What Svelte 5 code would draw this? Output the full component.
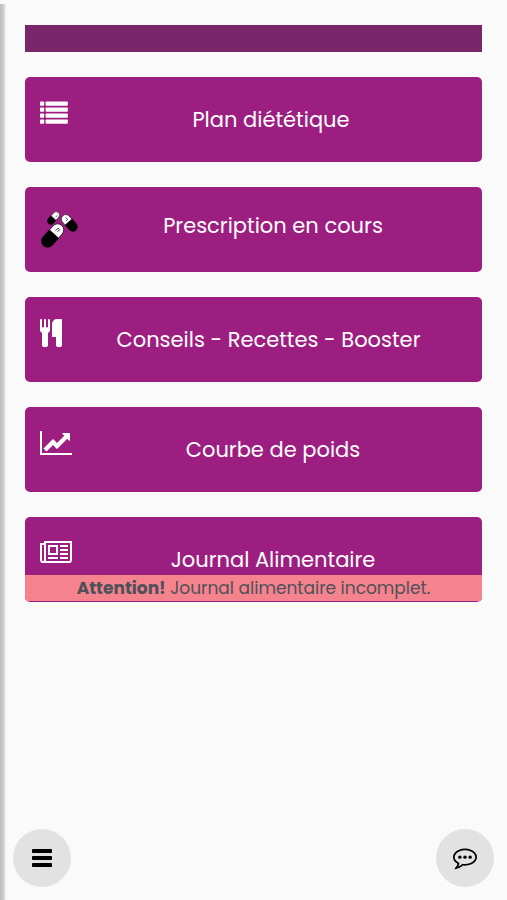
<script>
	const items = [
		{ label: 'Plan diététique', icon: 'list' },
		{ label: 'Prescription en cours', icon: 'pills' },
		{ label: 'Conseils - Recettes - Booster', icon: 'cutlery' },
		{ label: 'Courbe de poids', icon: 'chart' },
		{ label: 'Journal Alimentaire', icon: 'journal', warning: 'Journal alimentaire incomplet.' }
	];
</script>

<main class="page">
	<div class="banner"></div>

	{#each items as item}
		<button type="button" class="card">
			<span class="icon {item.icon}">
				{#if item.icon === 'list'}
					<svg width="28" height="28" viewBox="0 0 28 28" fill="currentColor">
						{#each [2.4, 8.4, 14.4, 20.4] as y}
							<rect x="0" {y} width="4.2" height="4.4" rx="0.8" />
							<rect x="5.6" {y} width="22.2" height="4.4" rx="0.8" />
						{/each}
					</svg>
				{:else if item.icon === 'pills'}
					<svg width="40" height="40" viewBox="0 0 40 40">
						<g transform="translate(13.5 9) rotate(42)">
							<path d="M-3.600 0V4a3.600 3.600 0 0 0 7.200 0V0z" fill="#000" />
							<path d="M-3.300 0V-4a3.300 3.300 0 0 1 6.600 0V0z" fill="#fff" stroke="#222" stroke-width="0.6" />
							<path d="M1-4.500v2.500" stroke="#444" stroke-width="0.7" />
						</g>
						<g transform="translate(28.500 13) rotate(-42)">
							<path d="M-4.800 0V6.500a4.800 4.800 0 0 0 9.600 0V0z" fill="#000" />
							<path d="M-4.500 0V-4a4.500 4.500 0 0 1 9 0V0z" fill="#fff" stroke="#222" stroke-width="0.7" />
							<path d="M1-5v2.500h-2" stroke="#333" stroke-width="0.8" fill="none" />
						</g>
						<g transform="translate(14 25) rotate(42)">
							<path d="M-6.500 0V9.500a6.500 6.500 0 0 0 13 0V0z" fill="#000" />
							<path d="M-6.100 0V-5.500a6.100 6.100 0 0 1 12.200 0V0z" fill="#fff" stroke="#111" stroke-width="0.8" />
							<path d="M-1-7v3.500M-1-7h2.200v3" stroke="#333" stroke-width="0.9" fill="none" />
						</g>
					</svg>
				{:else if item.icon === 'cutlery'}
					<svg width="22" height="28" viewBox="192 64 1408 1792" fill="currentColor">
						<path d="M832 128v640q0 61-35.500 111t-92.500 70v779q0 52-38 90t-90 38h-128q-52 0-90-38t-38-90v-779q-57-20-92.500-70t-35.500-111v-640q0-26 19-45t45-19 45 19 19 45v416q0 26 19 45t45 19 45-19 19-45v-416q0-26 19-45t45-19 45 19 19 45v416q0 26 19 45t45 19 45-19 19-45v-416q0-26 19-45t45-19 45 19 19 45zm768 0v1600q0 52-38 90t-90 38h-128q-52 0-90-38t-38-90v-512h-224q-13 0-22.500-9.500t-9.500-22.500v-800q0-132 94-226t226-94h256q26 0 45 19t19 45z" />
					</svg>
				{:else if item.icon === 'chart'}
					<svg width="32" height="28" viewBox="0 0 2048 1792" fill="currentColor">
						<path d="M2048 1536v128h-2048v-1536h128v1408h1920zm-128-1248v435q0 21-19.500 29.500t-35.500-7.500l-121-121-633 633q-10 10-23 10t-23-10l-233-233-416 416-192-192 585-585q10-10 23-10t23 10l233 233 464-464-121-121q-16-16-7.500-35.500t29.500-19.500h435q14 0 23 9t9 23z" />
					</svg>
				{:else}
					<svg width="32" height="28" viewBox="0 0 2048 1792" fill="currentColor">
						<path d="M1024 512h-384v384h384v-384zm128 640v128h-640v-128h640zm0-768v640h-640v-640h640zm640 768v128h-512v-128h512zm0-256v128h-512v-128h512zm0-256v128h-512v-128h512zm0-256v128h-512v-128h512zm-1536 960v-960h-128v960q0 26 19 45t45 19 45-19 19-45zm1664 0v-1088h-1536v1088q0 33-11 64h1483q26 0 45-19t19-45zm128-1216v1216q0 80-56 136t-136 56h-1664q-80 0-136-56t-56-136v-1088h256v-128h1792z" />
					</svg>
				{/if}
			</span>
			<span class="label" class:raised={item.icon === 'pills'}>{item.label}</span>
			{#if item.warning}
				<span class="warning"><strong>Attention!</strong> {item.warning}</span>
			{/if}
		</button>
	{/each}
</main>

<!-- Floating buttons -->
<nav class="floating">
	<button type="button" class="round" aria-label="Menu">
		<svg width="20" height="18" viewBox="0 0 20 18">
			<rect width="20" height="4" rx="0.8" />
			<rect y="7" width="20" height="4" rx="0.8" />
			<rect y="14" width="20" height="4" rx="0.8" />
		</svg>
	</button>
	<button type="button" class="round" aria-label="Messages">
		<svg width="24" height="24" viewBox="0 64 1792 1792">
			<circle cx="512" cy="896" r="128" />
			<circle cx="896" cy="896" r="128" />
			<circle cx="1280" cy="896" r="128" />
			<path d="M896 384q-204 0-381.500 69.500t-282 187.500-104.500 255q0 112 71.500 213.500t201.500 175.500l87 50-27 96q-24 91-70 172 152-63 275-171l43-38 57 6q69 8 130 8 204 0 381.500-69.500t282-187.500 104.500-255-104.500-255-282-187.500-381.500-69.500zm896 512q0 174-120 321.500t-326 233-450 85.500q-70 0-145-8-198 175-460 242-49 14-114 22h-5q-15 0-27-10.500t-16-27.500v-1q-3-4-.5-12t2-10 4.500-9.500l6-9 7-8.500 8-9q7-8 31-34.500t34.500-38 31-39.500 32.500-51 27-59 26-76q-157-89-247.500-220t-90.500-281q0-174 120-321.500t326-233 450-85.500 450 85.500 326 233 120 321.500z" />
		</svg>
	</button>
</nav>

<div class="edge"></div>

<style>
	:global(body) {
		margin: 0;
		background-color: #fafafa;
	}

	.page {
		display: flex;
		flex-direction: column;
		gap: 25px;
		padding: 25px 25px 96px;
		font-family: Poppins, Inter, sans-serif;
	}

	.banner {
		height: 27px;
		background-color: #79266b;
	}

	.card {
		position: relative;
		display: flex;
		align-items: flex-start;
		height: 85px;
		padding: 22px 15px 0;
		border: none;
		border-radius: 5px;
		background-color: #9d1e81;
		color: white;
		font-family: inherit;
		font-size: 21px;
		line-height: 33px;
		overflow: hidden;
		cursor: pointer;
	}

	.icon {
		flex: none;
		width: 39px;
		text-align: left;
	}
	.icon.list {
		width: 35px;
	}
	.icon.cutlery {
		width: 30px;
	}
	.icon svg {
		display: block;
	}

	.label {
		flex: 1;
		padding-top: 4px;
	}
	.label.raised {
		padding-top: 0;
	}

	.warning {
		position: absolute;
		left: 0;
		right: 0;
		bottom: 1px;
		background-color: #f4838d;
		color: #50505a;
		font-size: 17px;
		line-height: 26px;
	}

	.floating {
		position: fixed;
		left: 13px;
		right: 13px;
		bottom: 13px;
		display: flex;
		justify-content: space-between;
	}

	.round {
		display: flex;
		align-items: center;
		justify-content: center;
		width: 58px;
		height: 58px;
		padding: 0;
		border: none;
		border-radius: 50%;
		background-color: #e2e2e2;
		cursor: pointer;
	}

	/* Shadow along the left side of the window */
	.edge {
		position: fixed;
		top: 4px;
		bottom: 0;
		left: 0;
		width: 6px;
		background: linear-gradient(to right, #bdbdbd, #cecece 60%, #fafafa);
	}
</style>
